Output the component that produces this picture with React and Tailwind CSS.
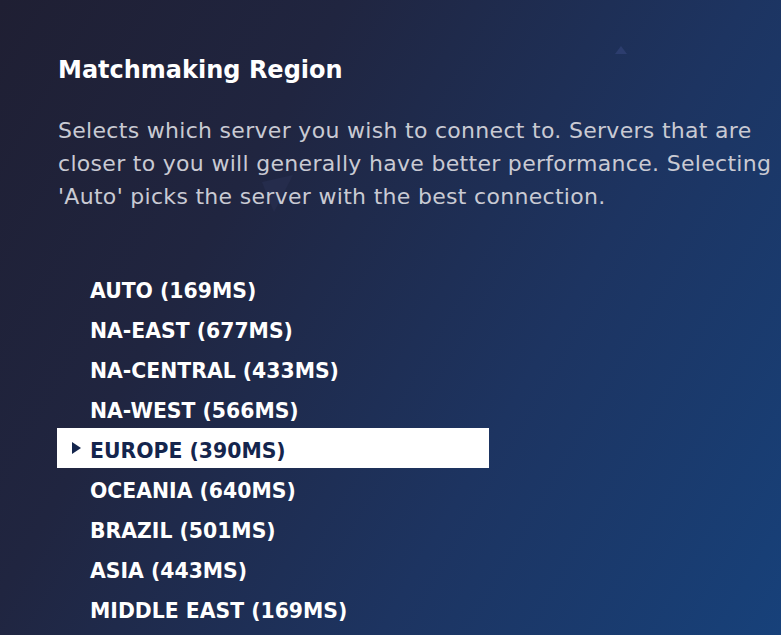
import React from "react";

const regions = [
  "AUTO (169MS)",
  "NA-EAST (677MS)",
  "NA-CENTRAL (433MS)",
  "NA-WEST (566MS)",
  "EUROPE (390MS)",
  "OCEANIA (640MS)",
  "BRAZIL (501MS)",
  "ASIA (443MS)",
  "MIDDLE EAST (169MS)",
];

export default function App() {
  const selected = 4;
  return (
    <div className="relative w-[781px] h-[635px] overflow-hidden bg-[linear-gradient(120deg,#1f1f33_0%,#202540_30%,#1d3461_65%,#17417a_100%)] font-['DejaVu_Sans',sans-serif]">
      <div className="absolute left-[615px] top-[46px] w-0 h-0 border-l-[6px] border-r-[6px] border-b-[8px] border-l-transparent border-r-transparent border-b-[#2c3d6e]" />
      <svg className="absolute left-[260px] top-[174px]" width="36" height="40" viewBox="0 0 36 40">
        <polygon points="33,1 2,8 14,38" fill="#252c4c" />
      </svg>
      <div className="relative pl-[58px] pt-[55px]">
        <h1 className="text-[24px] leading-[30px] font-bold text-white">
          Matchmaking Region
        </h1>
        <p className="mt-[29px] w-[715px] text-[22px] leading-[33px] text-[#c9cad3] tracking-[0.3px]">
          Selects which server you wish to connect to. Servers that are closer to you will generally have better performance. Selecting 'Auto' picks the server with the best connection.
        </p>
      </div>
      <div className="relative mt-[55px] flex flex-col">
        {regions.map((r, i) => (
          <div key={r} className="h-[40px] flex items-center">
            <div
              className={
                i === selected
                  ? "ml-[57px] w-[432px] h-[40px] flex items-center bg-white"
                  : "ml-[57px] w-[432px] h-[40px] flex items-center"
              }
            >
              <div className="w-[33px] flex justify-start pl-[15px]">
                {i === selected && (
                  <div className="w-0 h-0 border-t-[6px] border-b-[6px] border-l-[9px] border-t-transparent border-b-transparent border-l-[#14254d]" />
                )}
              </div>
              <span
                className={
                  i === selected
                    ? "pt-[6px] text-[20.4px] font-bold text-[#14254d]"
                    : "pt-[6px] text-[20.4px] font-bold text-white"
                }
              >
                {r}
              </span>
            </div>
          </div>
        ))}
      </div>
    </div>
  );
}
